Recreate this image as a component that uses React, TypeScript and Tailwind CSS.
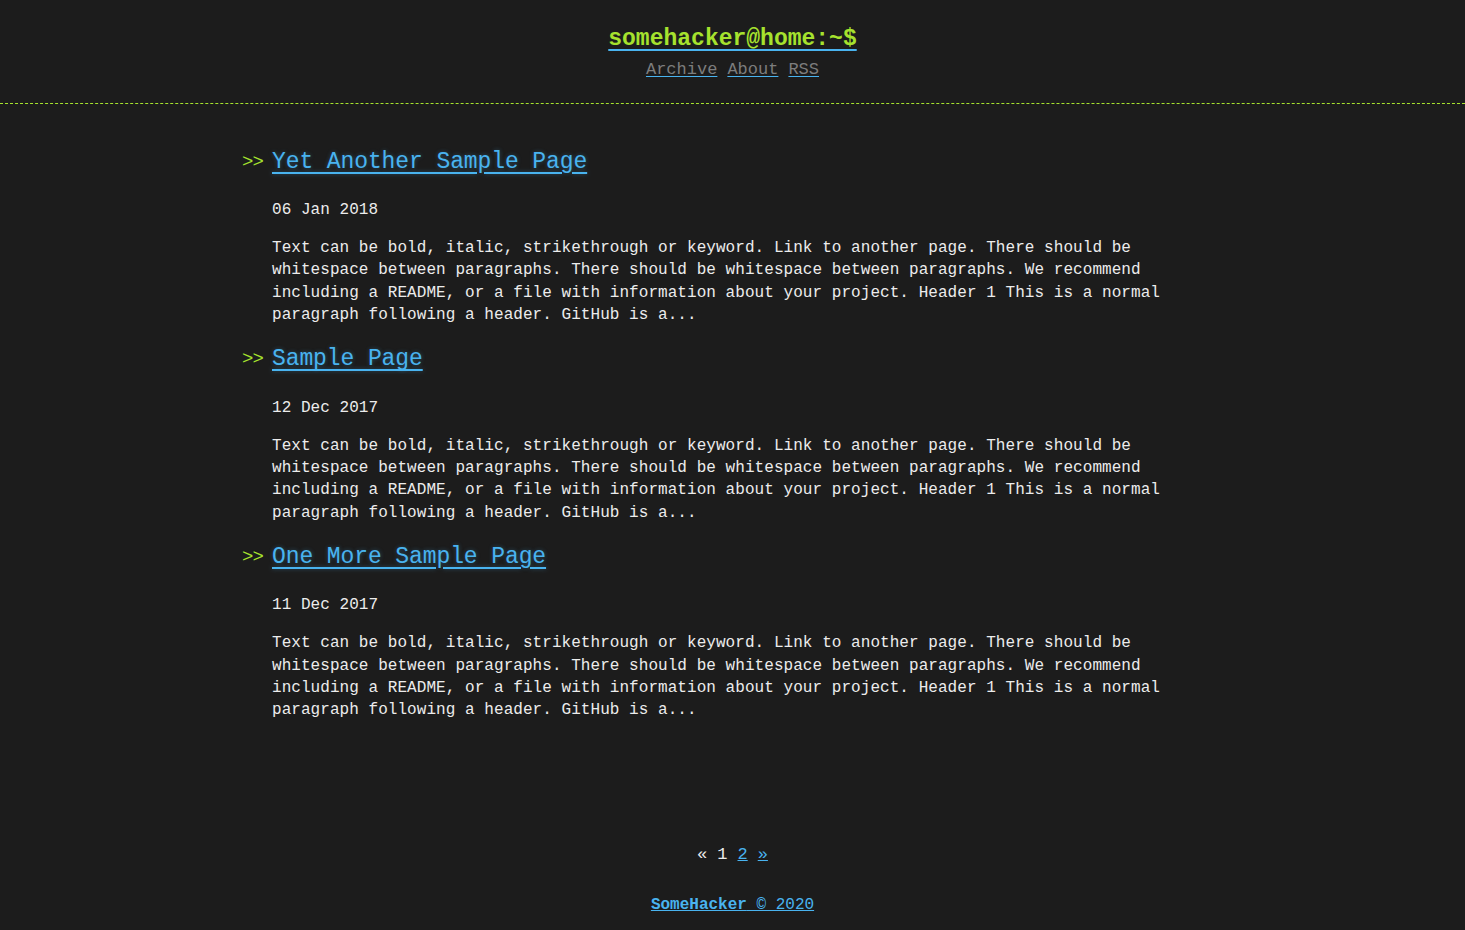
import React from 'react';

const excerpt =
  'Text can be bold, italic, strikethrough or keyword. Link to another page. There should be whitespace between paragraphs. There should be whitespace between paragraphs. We recommend including a README, or a file with information about your project. Header 1 This is a normal paragraph following a header. GitHub is a...';

const posts = [
  { title: 'Yet Another Sample Page', date: '06 Jan 2018' },
  { title: 'Sample Page', date: '12 Dec 2017' },
  { title: 'One More Sample Page', date: '11 Dec 2017' },
];

export default function App() {
  return (
    <div className="min-h-[930px] bg-[#1c1c1c] text-[#ececec] font-['Liberation_Mono',monospace] flex flex-col">
      {/* Header */}
      <header className="border-b border-dashed border-[#a6e22e] pt-[23px] pb-[21px] text-center">
        <a
          href="#"
          className="block w-fit mx-auto text-[23px] leading-[32px] font-bold text-[#a6e22e] underline decoration-[#49b3ef] decoration-2 underline-offset-4"
        >
          somehacker@home:~$
        </a>
        <nav className="mt-[3px] flex justify-center gap-[10px] text-[17px] leading-[24px]">
          {['Archive', 'About', 'RSS'].map((item) => (
            <a key={item} href="#" className="text-[#7d7d7d] underline decoration-[#49b3ef] underline-offset-2">
              {item}
            </a>
          ))}
        </nav>
      </header>

      {/* Posts */}
      <main className="w-[981px] mx-auto pt-[42px]">
        {posts.map((post, i) => (
          <article key={post.title} className={i > 0 ? 'mt-[17px]' : ''}>
            <h2 className="flex items-center h-[32px]">
              <span className="w-[30px] text-[19px] tracking-[-1px] text-[#a6e22e]">&gt;&gt;</span>
              <a
                href="#"
                className="text-[23px] tracking-[-0.1px] text-[#49b3ef] underline underline-offset-4 [text-shadow:0_0_4px_rgba(73,179,239,0.35)]"
              >
                {post.title}
              </a>
            </h2>
            <div className="pl-[30px]">
              <p className="mt-[21px] text-[16px] leading-[22px] tracking-[0.05px]">{post.date}</p>
              <p className="mt-[16px] text-[16px] leading-[22.4px] tracking-[0.05px]">{excerpt}</p>
            </div>
          </article>
        ))}
      </main>

      {/* Pagination */}
      <div className="mt-[121px] flex justify-center gap-[10px] text-[17px] leading-[24px]">
        <span className="text-[#ececec]">«</span>
        <span className="text-[#ececec]">1</span>
        <a href="#" className="text-[#49b3ef] underline">2</a>
        <a href="#" className="text-[#49b3ef] underline">»</a>
      </div>

      {/* Footer */}
      <footer className="mt-[26px] pb-[14px] text-center text-[16px] leading-[24px]">
        <a href="#" className="text-[#49b3ef] underline">
          <span className="font-bold">SomeHacker</span> © 2020
        </a>
      </footer>
    </div>
  );
}
